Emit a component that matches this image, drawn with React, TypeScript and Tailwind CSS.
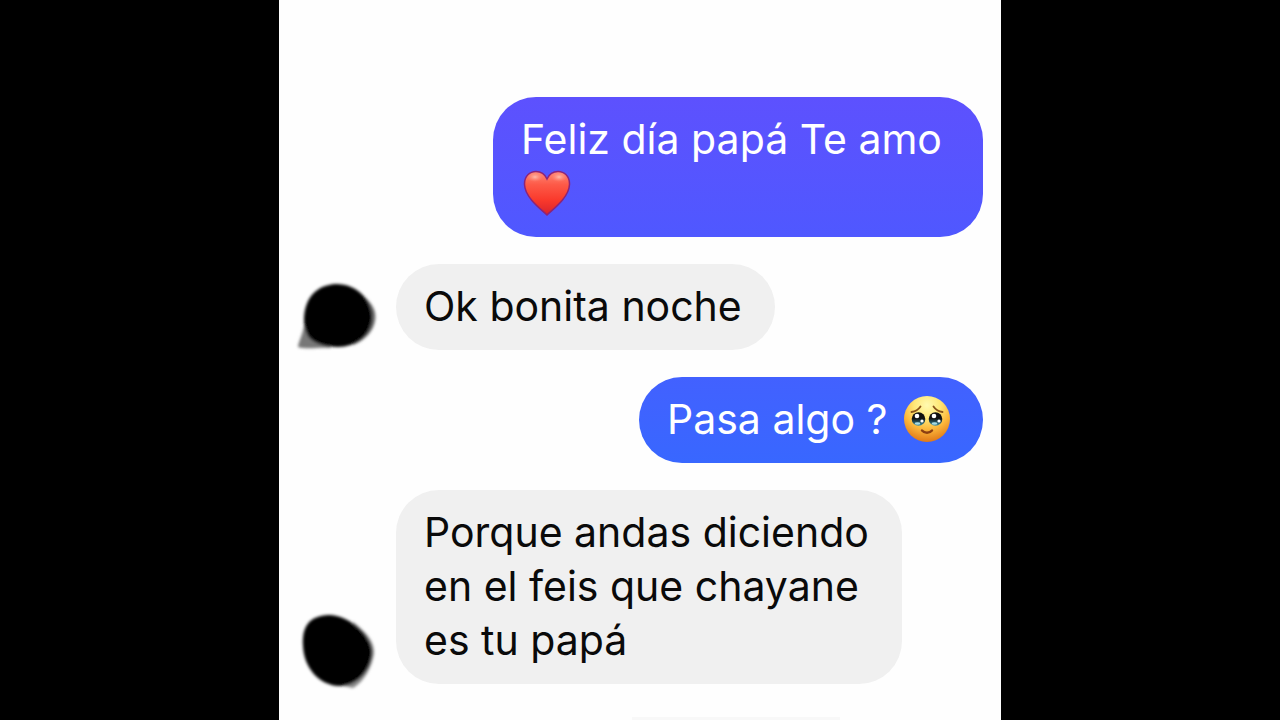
import type { ReactNode } from "react";
import clsx from "clsx";

function Heart() {
  return (
    <svg viewBox="0 0 48 46" className="w-12 h-[46px]" role="img" aria-label="corazón">
      <defs>
        <linearGradient id="heart" x1="0" y1="0" x2="0" y2="1">
          <stop offset="0" stopColor="#ff8a78" />
          <stop offset="0.3" stopColor="#fd5a48" />
          <stop offset="0.65" stopColor="#fa3a2c" />
          <stop offset="1" stopColor="#d8222c" />
        </linearGradient>
        <radialGradient id="shine">
          <stop offset="0" stopColor="#ffc4b4" stopOpacity="0.9" />
          <stop offset="1" stopColor="#ff8a78" stopOpacity="0" />
        </radialGradient>
      </defs>
      <path
        d="M24 45C19 40 2 28 1.500 14.500C1.200 6 7 1.500 13 1.500C18.500 1.500 22 4.500 24 9C26 4.500 29.500 1.500 35 1.500C41 1.500 46.800 6 46.500 14.500C46 28 29 40 24 45Z"
        fill="url(#heart)"
        stroke="#8c2478"
        strokeWidth="1.500"
      />
      <ellipse cx="12" cy="7" rx="8" ry="5" fill="url(#shine)" />
      <ellipse cx="36" cy="7" rx="8" ry="5" fill="url(#shine)" />
    </svg>
  );
}

function TearyFace() {
  return (
    <svg viewBox="0 0 48 48" className="size-12" role="img" aria-label="cara a punto de llorar">
      <defs>
        <radialGradient id="face" cx="0.5" cy="0.2" r="0.8">
          <stop offset="0" stopColor="#fffab0" />
          <stop offset="0.35" stopColor="#ffe878" />
          <stop offset="0.65" stopColor="#fdb93c" />
          <stop offset="1" stopColor="#e07818" />
        </radialGradient>
        <linearGradient id="tear" x1="0" y1="0" x2="0" y2="1">
          <stop offset="0.45" stopColor="#101010" />
          <stop offset="1" stopColor="#3f93a8" />
        </linearGradient>
      </defs>
      <circle cx="24" cy="24" r="23" fill="url(#face)" />
      <g fill="none" stroke="#8a5418" strokeWidth="1.800" strokeLinecap="round">
        <path d="M8.500 17C12 16.500 15.500 14.500 17.500 11.500" />
        <path d="M39.500 17C36 16.500 32.500 14.500 30.500 11.500" />
        <path d="M19 35.500C21.500 38.500 26.500 38.500 29 35.500" stroke="#8c3f12" strokeWidth="2.400" />
      </g>
      <circle cx="15.500" cy="24" r="6.800" fill="url(#tear)" />
      <circle cx="32.500" cy="24" r="6.800" fill="url(#tear)" />
      <g fill="#fff">
        <circle cx="14" cy="21" r="2.300" />
        <circle cx="31" cy="21" r="2.300" />
        <circle cx="19" cy="26" r="1.600" />
        <circle cx="36" cy="26" r="1.600" />
        <ellipse cx="14.500" cy="28.500" rx="2.800" ry="1.300" fill="#a9dce4" />
        <ellipse cx="31.500" cy="28.500" rx="2.800" ry="1.300" fill="#a9dce4" />
      </g>
    </svg>
  );
}

// avatars scribbled over with a soft black brush
function ScribbleOne() {
  return (
    <svg viewBox="0 0 84 80" className="w-[84px] h-20 overflow-visible" aria-hidden="true">
      <defs>
        <filter id="soft" x="-20%" y="-20%" width="140%" height="140%">
          <feGaussianBlur stdDeviation="1.600" />
        </filter>
      </defs>
      <g filter="url(#soft)">
        <path d="M10 50C9 62 3 73 3 77C12 80 24 77 36 78L28 62Z" fill="#777" />
        <path d="M60 21C72 27 83 38 80 51C78 62 70 70 58 75Z" fill="#666" />
        <path d="M9 48C10 27 22 15 41 14C62 14 77 30 77 48C76 66 60 77 43 77C32 77 18 74 13 66C10 60 9 56 9 48Z" fill="#020204" />
      </g>
    </svg>
  );
}

function ScribbleTwo() {
  return (
    <svg viewBox="0 0 84 80" className="w-[84px] h-20 overflow-visible" aria-hidden="true">
      <g filter="url(#soft)">
        <path d="M58 18C68 26 80 36 79 50C77 62 70 77 58 84L40 80Z" fill="#888" />
        <path d="M8 42C7 22 14 12 34 11C54 11 76 31 77 47C77 64 64 82 44 82C24 81 9 64 8 42Z" fill="#020202" />
      </g>
    </svg>
  );
}

function Sent({ className, children }: { className: string; children: ReactNode }) {
  return (
    <div className="flex justify-end pr-[18px]">
      <div className={clsx("rounded-[43px] px-7 pt-[15px] pb-[17px] text-white", className)}>
        {children}
      </div>
    </div>
  );
}

function Received({ avatar, className, children }: { avatar: ReactNode; className: string; children: ReactNode }) {
  return (
    <div className="flex items-end pl-4">
      <div className="w-[101px] shrink-0">{avatar}</div>
      <div className={clsx("rounded-[43px] bg-[#f0f0f0] px-7 pt-[15px] pb-[17px] text-[#0a0a0a]", className)}>
        {children}
      </div>
    </div>
  );
}

export default function App() {
  return (
    <div className="h-screen overflow-hidden bg-black">
      <main className="mx-auto flex h-full w-full max-w-[722px] flex-col gap-[27px] bg-[#fefefe] pt-[97px] font-['Inter',sans-serif] text-[41px] leading-[54px] *:shrink-0">
        <Sent className="w-[490px] bg-linear-to-b from-[#5d51fe] to-[#4f58ff]">
          <p>Feliz día papá Te amo</p>
          <div className="flex h-[54px] items-center pl-0.5">
            <Heart />
          </div>
        </Sent>
        <Received avatar={<ScribbleOne />} className="w-[379px]">
          <p>Ok bonita noche</p>
        </Received>
        <Sent className="w-[344px] bg-linear-to-b from-[#4261ff] to-[#3867ff]">
          <div className="flex items-center justify-between pr-1">
            <p>Pasa algo ?</p>
            <TearyFace />
          </div>
        </Sent>
        <Received avatar={<ScribbleTwo />} className="w-[506px]">
          <p>Porque andas diciendo en el feis que chayane es tu papá</p>
        </Received>
        {/* top edge of whatever comes next */}
        <div className="mt-1.5 ml-[353px] h-1 w-52 bg-[#f8f8f8]" />
      </main>
    </div>
  );
}
